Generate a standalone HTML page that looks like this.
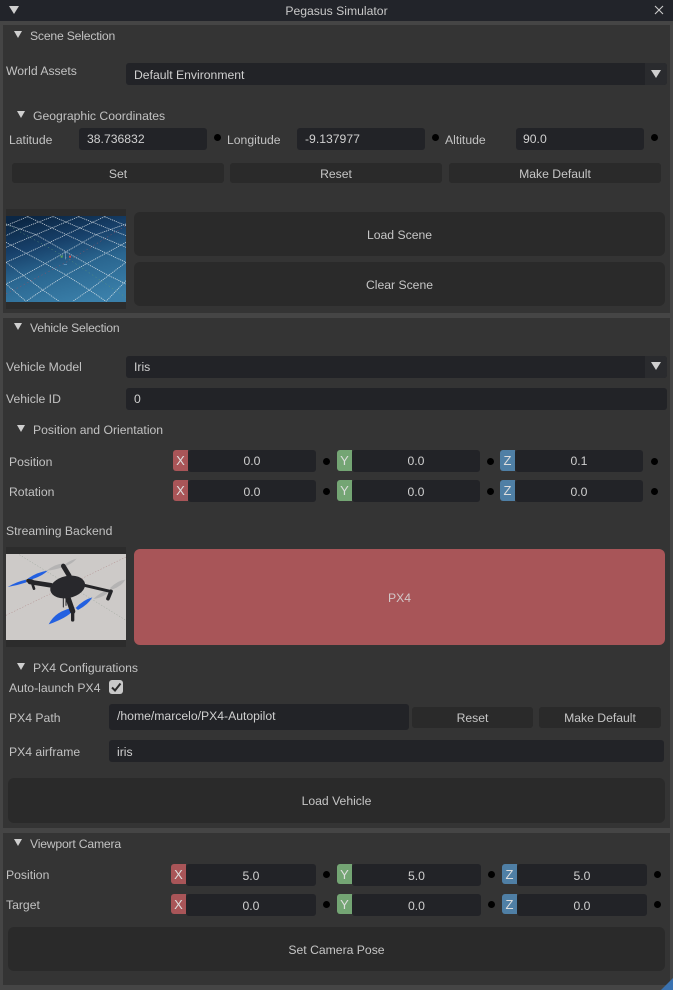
<!DOCTYPE html>
<html><head><meta charset="utf-8"><title>Pegasus Simulator</title>
<style>
html,body{margin:0;padding:0;background:#454545}
#r{position:relative;width:673px;height:990px;overflow:hidden;background:#454545;font-family:"Liberation Sans",sans-serif;font-size:12.2px;color:#c2c2c2}
#r div{position:absolute;box-sizing:border-box;white-space:nowrap}
.p{background:#343434;left:3px;width:667px}
.t{line-height:16px;height:16px}
.i{background:#222327;border-radius:3px;line-height:22px;height:22px;color:#d0d0d0}
.l{line-height:24px}
.c{text-align:center}
.b{background:#2a2a2a;border-radius:3px;text-align:center;color:#c6c6c6}
.x,.y,.z{width:15px;height:21px;line-height:22px;text-align:center;border-radius:3px 0 0 3px;font-size:13px;color:#ddd}
.x{background:#a95558}.y{background:#74a574}.z{background:#4f7fa5}
.d{width:7px;height:7px;border-radius:50%;background:#000}
.a{width:0;height:0;border-left:4px solid transparent;border-right:4px solid transparent;border-top:7px solid #cfcfcf}
.bar{background:#2c2c2c;left:6px;width:120px;height:100px}
</style></head><body><div id="r">
<div style="left:0;top:0;width:673px;height:21px;background:#22242a"></div>
<div class="a" style="left:9px;top:6px;border-left-width:5px;border-right-width:5px;border-top-width:8px"></div>
<div class="t c" style="left:0;width:673px;top:3px;color:#c8c8c8">Pegasus Simulator</div>
<svg style="position:absolute;left:654px;top:5px" width="10" height="10"><path d="M1 1L9 9M9 1L1 9" stroke="#ccc" stroke-width="1.1"/></svg>

<div class="p" style="top:25px;height:288px"></div>
<div class="p" style="top:318px;height:510px"></div>
<div class="p" style="top:833px;height:152px"></div>
<svg style="position:absolute;left:661px;top:978px" width="12" height="12"><path d="M12 0V12H0Z" fill="#3a72b0"/></svg>

<!-- Scene -->
<div class="a" style="left:14px;top:31px"></div>
<div class="t" style="left:30px;top:28px;letter-spacing:-.2px">Scene Selection</div>
<div class="t" style="left:6px;top:63px">World Assets</div>
<div class="i l" style="left:126px;top:63px;width:541px;padding-left:8px">Default Environment</div>
<div style="left:645px;top:63px;width:22px;height:22px;background:#2a2b2e;border-radius:0 3px 3px 0"></div>
<div class="a" style="left:651px;top:70px;border-left-width:5px;border-right-width:5px;border-top-width:8px"></div>

<div class="a" style="left:17px;top:111px"></div>
<div class="t" style="left:33px;top:108px">Geographic Coordinates</div>
<div class="t" style="left:9px;top:132px">Latitude</div>
<div class="i" style="left:79px;top:128px;width:128px;padding-left:8px">38.736832</div>
<div class="d" style="left:214px;top:134px"></div>
<div class="t" style="left:227px;top:132px">Longitude</div>
<div class="i" style="left:297px;top:128px;width:128px;padding-left:8px">-9.137977</div>
<div class="d" style="left:432px;top:134px"></div>
<div class="t" style="left:445px;top:132px">Altitude</div>
<div class="i" style="left:516px;top:128px;width:128px;padding-left:7px">90.0</div>
<div class="d" style="left:651px;top:134px"></div>
<div class="b" style="left:12px;top:163px;width:212px;height:20px;line-height:22px">Set</div>
<div class="b" style="left:230px;top:163px;width:212px;height:20px;line-height:22px">Reset</div>
<div class="b" style="left:449px;top:163px;width:212px;height:20px;line-height:22px">Make Default</div>

<div class="bar" style="top:209px"></div>
<svg style="position:absolute;left:6px;top:216px" width="120" height="86" viewBox="0 6 360 258">
<defs><linearGradient id="g" x1="0.3" y1="0" x2="0.65" y2="1"><stop offset="0" stop-color="#0b2745"/><stop offset=".3" stop-color="#17406a"/><stop offset=".6" stop-color="#2a6690"/><stop offset="1" stop-color="#3a7fa9"/></linearGradient></defs>
<rect x="0" y="6" width="360" height="258" fill="url(#g)"/>
<g fill="none" stroke-width="1.5" stroke-dasharray="4 8"><path d="M0 240L180 145L360 35" stroke="#a05060"/><path d="M0 30L180 130L360 250" stroke="#5f9a78"/></g>
<g stroke="#e4eaee" stroke-width="2.4" fill="none" stroke-dasharray="3.5 2.5" opacity=".85">
<path d="M65 8L360 145M142 8L360 100M218 8L360 65M296 8L360 35M0 30L90 62L235 145L305 183L360 210M0 85L175 180L250 228L300 262M0 145L110 228L160 262M0 210L60 262"/>
<path d="M296 8L180 62L72 113L0 145M218 8L90 62L0 100M140 8L30 50L0 65M65 8L0 35M360 30L270 62L125 145L55 183L0 210M360 85L185 180L110 228L60 262M360 145L250 228L200 262M360 200L300 262"/>
</g>
<path d="M178 112V136" stroke="#7fa6c8" stroke-width="2"/>
<rect x="189" y="125" width="6" height="6" fill="#d04b4b"/><rect x="164" y="125" width="6" height="6" fill="#5da35d"/><rect x="173" y="150" width="10" height="3" fill="#5a8fb8"/>
</svg>
<div class="b" style="left:134px;top:212px;width:531px;height:44px;line-height:47px;border-radius:6px">Load Scene</div>
<div class="b" style="left:134px;top:262px;width:531px;height:44px;line-height:47px;border-radius:6px">Clear Scene</div>

<!-- Vehicle -->
<div class="a" style="left:14px;top:323px"></div>
<div class="t" style="left:30px;top:320px;letter-spacing:-.2px">Vehicle Selection</div>
<div class="t" style="left:6px;top:359px">Vehicle Model</div>
<div class="i" style="left:126px;top:356px;width:541px;padding-left:8px">Iris</div>
<div style="left:645px;top:356px;width:22px;height:22px;background:#2a2b2e;border-radius:0 3px 3px 0"></div>
<div class="a" style="left:651px;top:362px;border-left-width:5px;border-right-width:5px;border-top-width:8px"></div>
<div class="t" style="left:6px;top:391px">Vehicle ID</div>
<div class="i" style="left:126px;top:388px;width:541px;padding-left:8px">0</div>
<div class="a" style="left:17px;top:425px"></div>
<div class="t" style="left:33px;top:422px">Position and Orientation</div>

<div class="t" style="left:9px;top:454px">Position</div>
<div class="x" style="left:173px;top:450px">X</div><div class="i c" style="left:188px;top:450px;width:128px">0.0</div><div class="d" style="left:323px;top:458px"></div>
<div class="y" style="left:337px;top:450px">Y</div><div class="i c" style="left:352px;top:450px;width:128px">0.0</div><div class="d" style="left:487px;top:458px"></div>
<div class="z" style="left:500px;top:450px">Z</div><div class="i c" style="left:515px;top:450px;width:128px">0.1</div><div class="d" style="left:651px;top:458px"></div>
<div class="t" style="left:9px;top:484px">Rotation</div>
<div class="x" style="left:173px;top:480px">X</div><div class="i c l" style="left:188px;top:480px;width:128px">0.0</div><div class="d" style="left:323px;top:488px"></div>
<div class="y" style="left:337px;top:480px">Y</div><div class="i c l" style="left:352px;top:480px;width:128px">0.0</div><div class="d" style="left:487px;top:488px"></div>
<div class="z" style="left:500px;top:480px">Z</div><div class="i c l" style="left:515px;top:480px;width:128px">0.0</div><div class="d" style="left:651px;top:488px"></div>

<div class="t" style="left:6px;top:523px">Streaming Backend</div>
<div class="bar" style="top:547px"></div>
<svg style="position:absolute;left:6px;top:554px" width="120" height="86" viewBox="0 6 360 258">
<rect x="0" y="6" width="360" height="258" fill="#cdcac8"/>
<g stroke-width="1.5" stroke-dasharray="4 5" fill="none"><path d="M40 8L360 205" stroke="#9aa59a"/><path d="M0 190L360 15" stroke="#b08a8a"/></g>
<g fill="#b4b3b3"><path d="M122 56Q146 36 172 34L168 46Q146 54 122 56Z"/><path d="M178 36Q195 24 212 20Q200 34 180 42Z"/><path d="M262 141Q284 120 306 114L302 126Q284 138 262 141Z"/><path d="M312 108Q334 86 358 83Q348 102 320 112Z"/></g>
<g fill="#2360e0"><path d="M5 105Q30 90 60 83L61 91Q34 100 5 105Z"/><path d="M65 80Q95 60 125 56Q110 72 72 84Z"/><path d="M128 217Q148 176 206 166Q198 192 128 217Z"/><path d="M209 168Q232 143 259 136Q247 157 216 174Z"/></g>
<g stroke="#252528" fill="none" stroke-linecap="round"><path d="M72 90L135 100" stroke-width="14"/><path d="M172 42L190 72" stroke-width="14"/><path d="M235 100L312 118" stroke-width="9"/><path d="M185 135L200 178" stroke-width="16"/><path d="M172 130V165" stroke-width="3"/><path d="M180 130V160" stroke-width="3"/><path d="M80 98L84 110" stroke-width="8"/><path d="M315 118L306 140" stroke-width="11"/><path d="M200 180V204" stroke-width="10"/><path d="M66 86L78 88" stroke-width="11"/></g>
<ellipse cx="185" cy="105" rx="53" ry="33" fill="#28282c" transform="rotate(-12 185 105)"/>
</svg>
<div class="b" style="left:134px;top:549px;width:531px;height:96px;line-height:98px;background:#a85558;border-radius:6px;color:#d2c8c8">PX4</div>

<div class="a" style="left:17px;top:663px"></div>
<div class="t" style="left:33px;top:660px">PX4 Configurations</div>
<div class="t" style="left:9px;top:680px">Auto-launch PX4</div>
<div style="left:109px;top:680px;width:14px;height:14px;background:#c9c9c9;border-radius:3px"></div>
<svg style="position:absolute;left:109px;top:680px" width="14" height="14"><path d="M3 7.5L6 10.5L11.5 3.5" fill="none" stroke="#2a2a2a" stroke-width="2"/></svg>
<div class="t" style="left:9px;top:710px">PX4 Path</div>
<div class="i" style="left:109px;top:704px;width:300px;height:26px;padding-left:8px;line-height:25px">/home/marcelo/PX4-Autopilot</div>
<div class="b" style="left:412px;top:707px;width:121px;height:21px;line-height:22px">Reset</div>
<div class="b" style="left:539px;top:707px;width:122px;height:21px;line-height:22px">Make Default</div>
<div class="t" style="left:9px;top:744px">PX4 airframe</div>
<div class="i l" style="left:109px;top:740px;width:555px;padding-left:8px">iris</div>
<div class="b" style="left:8px;top:778px;width:657px;height:45px;line-height:47px;border-radius:6px">Load Vehicle</div>

<!-- Camera -->
<div class="a" style="left:14px;top:839px"></div>
<div class="t" style="left:30px;top:836px;letter-spacing:-.2px">Viewport Camera</div>
<div class="t" style="left:6px;top:867px">Position</div>
<div class="x" style="left:171px;top:864px;height:20px;line-height:21px">X</div><div class="i c l" style="left:186px;top:864px;width:130px">5.0</div><div class="d" style="left:323px;top:871px"></div>
<div class="y" style="left:337px;top:864px;height:20px;line-height:21px">Y</div><div class="i c l" style="left:352px;top:864px;width:129px">5.0</div><div class="d" style="left:488px;top:871px"></div>
<div class="z" style="left:502px;top:864px;height:20px;line-height:21px">Z</div><div class="i c l" style="left:517px;top:864px;width:130px">5.0</div><div class="d" style="left:654px;top:871px"></div>
<div class="t" style="left:6px;top:897px">Target</div>
<div class="x" style="left:171px;top:894px;height:20px;line-height:21px">X</div><div class="i c l" style="left:186px;top:894px;width:130px">0.0</div><div class="d" style="left:323px;top:901px"></div>
<div class="y" style="left:337px;top:894px;height:20px;line-height:21px">Y</div><div class="i c l" style="left:352px;top:894px;width:129px">0.0</div><div class="d" style="left:488px;top:901px"></div>
<div class="z" style="left:502px;top:894px;height:20px;line-height:21px">Z</div><div class="i c l" style="left:517px;top:894px;width:130px">0.0</div><div class="d" style="left:654px;top:901px"></div>
<div class="b" style="left:8px;top:927px;width:657px;height:44px;line-height:47px;border-radius:6px">Set Camera Pose</div>
</div></body></html>
